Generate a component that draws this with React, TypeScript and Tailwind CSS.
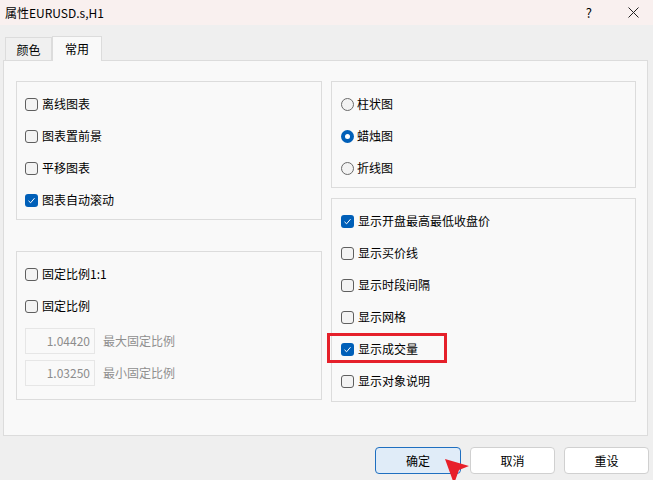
import React from "react";

type Item = { label: string; checked?: boolean; marked?: boolean };

const leftTop: Item[] = [
  { label: "离线图表" },
  { label: "图表置前景" },
  { label: "平移图表" },
  { label: "图表自动滚动", checked: true },
];

const rightBottom: Item[] = [
  { label: "显示开盘最高最低收盘价", checked: true },
  { label: "显示买价线" },
  { label: "显示时段间隔" },
  { label: "显示网格" },
  { label: "显示成交量", checked: true, marked: true },
  { label: "显示对象说明" },
];

function Check({ checked }: { checked?: boolean }) {
  if (checked) {
    return (
      <span className="flex h-[13px] w-[13px] shrink-0 items-center justify-center rounded-[3px] bg-[#005fb8]">
        <svg width="9" height="9" viewBox="0 0 9 9" fill="none">
          <path d="M1.5 4.8 L3.6 6.8 L7.5 2.2" stroke="#fff" strokeWidth="1" />
        </svg>
      </span>
    );
  }
  return <span className="h-[13px] w-[13px] shrink-0 rounded-[3px] border border-[#5f5f5f] bg-[#f3f3f3]" />;
}

function Radio({ checked }: { checked?: boolean }) {
  if (checked) {
    return (
      <span className="flex h-[13px] w-[13px] shrink-0 items-center justify-center rounded-full bg-[#005fb8]">
        <span className="h-[5px] w-[5px] rounded-full bg-white" />
      </span>
    );
  }
  return <span className="h-[13px] w-[13px] shrink-0 rounded-full border border-[#6a6a6a] bg-[#f3f3f3]" />;
}

function Row({ item }: { item: Item }) {
  return (
    <div className="relative flex h-[32px] items-center gap-[4px]">
      <Check checked={item.checked} />
      <span>{item.label}</span>
      {item.marked ? (
        <div className="absolute left-[-14px] top-0 h-[30px] w-[120px] border-[3px] border-[#e5202a]" />
      ) : null}
    </div>
  );
}

function NumberBox({ value, label }: { value: string; label: string }) {
  return (
    <div className="flex items-center gap-[8px]">
      <div className="flex h-[26px] w-[70px] items-center justify-end border border-[#e6e6e6] bg-[#f9f9f9] pr-[4px] text-[#8c8c8c]">
        {value}
      </div>
      <span className="text-[#8f8f8f]">{label}</span>
    </div>
  );
}

export default function App() {
  return (
    <div
      className="relative h-[480px] w-[653px] overflow-hidden bg-[#efefef] text-[12px] leading-none text-black"
      style={{ fontFamily: '"Noto Sans CJK SC", "Noto Sans", sans-serif' }}
    >
      <div className="flex h-[25px] items-center bg-[#f9f0ef] pl-[5px]">
        <span>属性EURUSD.s,H1</span>
        <span className="ml-auto mr-[36px] text-[13px]">?</span>
        <svg className="mr-[14px]" width="11" height="11" viewBox="0 0 11 11" fill="none">
          <path d="M0.5 0.5 L10.5 10.5 M10.5 0.5 L0.5 10.5" stroke="#222" strokeWidth="1" />
        </svg>
      </div>

      <div className="flex h-[35px] items-end pl-[5px]">
        <div className="flex h-[23px] w-[47px] items-center justify-center border border-b-0 border-[#dcdcdc] bg-[#f0f0f0] pt-[2px]">
          颜色
        </div>
        <div className="relative z-10 mb-[-1px] flex h-[25px] w-[50px] items-center justify-center border border-b-0 border-[#dcdcdc] bg-[#f9f9f9]">
          常用
        </div>
      </div>

      <div className="mx-[3px] h-[376px] w-[645px] border border-[#dcdcdc] bg-[#f9f9f9] pl-[12px] pt-[20px]">
        <div className="flex gap-[9px]">
          <div className="flex w-[306px] flex-col gap-[31px]">
            <div className="h-[139px] border border-[#dcdcdc] pl-[8px] pt-[6px]">
              {leftTop.map((item) => (
                <Row key={item.label} item={item} />
              ))}
            </div>
            <div className="h-[149px] border border-[#dcdcdc] pl-[8px] pt-[6px]">
              <Row item={{ label: "固定比例1:1" }} />
              <Row item={{ label: "固定比例" }} />
              <div className="mt-[6px] flex flex-col gap-[6px]">
                <NumberBox value="1.04420" label="最大固定比例" />
                <NumberBox value="1.03250" label="最小固定比例" />
              </div>
            </div>
          </div>

          <div className="flex w-[305px] flex-col gap-[10px]">
            <div className="h-[107px] border border-[#dcdcdc] pl-[9px] pt-[6px]">
              {["柱状图", "蜡烛图", "折线图"].map((label) => (
                <div key={label} className="flex h-[32px] items-center gap-[3px]">
                  <Radio checked={label === "蜡烛图"} />
                  <span>{label}</span>
                </div>
              ))}
            </div>
            <div className="h-[204px] border border-[#dcdcdc] pl-[9px] pt-[6px]">
              {rightBottom.map((item) => (
                <Row key={item.label} item={item} />
              ))}
            </div>
          </div>
        </div>
      </div>

      <div className="mt-[11px] flex justify-end gap-[9px] pr-[4px]">
        <button className="h-[27px] w-[86px] rounded-[4px] border border-[#1f6fc0] bg-[#e0ecf8]">确定</button>
        <button className="h-[27px] w-[85px] rounded-[4px] border border-[#d0d0d0] bg-white">取消</button>
        <button className="h-[27px] w-[85px] rounded-[4px] border border-[#d0d0d0] bg-white">重设</button>
      </div>

      <svg className="absolute left-[443px] top-[457px]" width="28" height="24" viewBox="0 0 28 24">
        <polygon points="2,2 26,9 16,13 12,24 10,24" fill="#e8202a" />
      </svg>
    </div>
  );
}
